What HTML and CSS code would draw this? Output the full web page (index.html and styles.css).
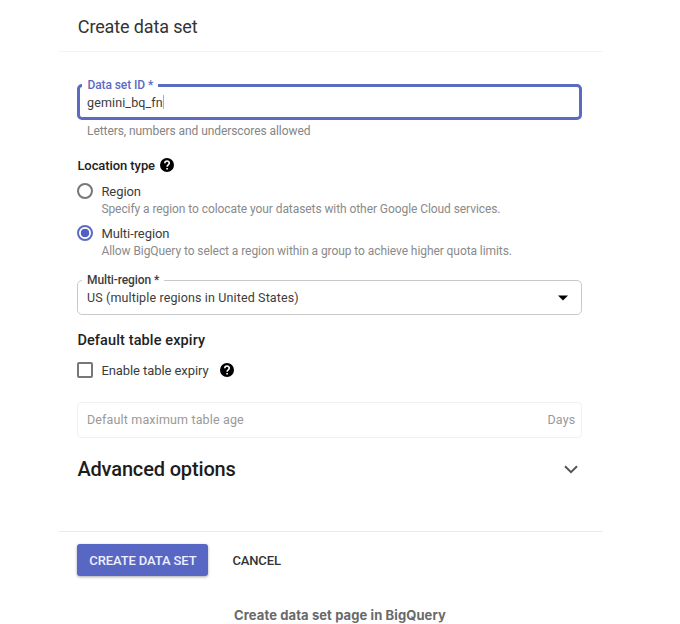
FILE: index.html
```html
<!DOCTYPE html>
<html lang="en">
<head>
<meta charset="utf-8">
<title>Create data set</title>
<link rel="stylesheet" href="styles.css">
</head>
<body>
<figure class="figure">
  <section class="panel">
    <header class="panel-header"><h1 class="title">Create data set</h1></header>
    <form class="form">
      <fieldset class="field field-active">
        <legend class="legend"><span>Data set ID *</span></legend>
        <div class="field-row"><span>gemini_bq_fn</span><span class="caret"></span></div>
      </fieldset>
      <p class="hint">Letters, numbers and underscores allowed</p>

      <h2 class="group-title"><span>Location type</span>
        <svg class="help" viewBox="0 0 14 14"><circle cx="7" cy="7" r="7"/><path d="M4.8 5.3C4.8 2.2 9.3 2.3 9.3 5.1C9.3 6.8 7.1 6.9 7.1 8.7M7.1 10v1.6"/></svg>
      </h2>
      <div class="option">
        <span class="radio"></span>
        <div><div class="option-label">Region</div>
        <div class="option-desc">Specify a region to colocate your datasets with other Google Cloud services.</div></div>
      </div>
      <div class="option">
        <span class="radio radio-on"></span>
        <div><div class="option-label">Multi-region</div>
        <div class="option-desc">Allow BigQuery to select a region within a group to achieve higher quota limits.</div></div>
      </div>

      <fieldset class="field field-select">
        <legend class="legend"><span>Multi-region *</span></legend>
        <div class="field-row"><span>US (multiple regions in United States)</span>
          <svg class="arrow" viewBox="0 0 10 6"><path d="M0 .5h10L5 5.5z"/></svg></div>
      </fieldset>

      <h2 class="expiry-title">Default table expiry</h2>
      <div class="check-row">
        <span class="checkbox"></span>
        <span class="check-label">Enable table expiry</span>
        <svg class="help" viewBox="0 0 14 14"><circle cx="7" cy="7" r="7"/><path d="M4.8 5.3C4.8 2.2 9.3 2.3 9.3 5.1C9.3 6.8 7.1 6.9 7.1 8.7M7.1 10v1.6"/></svg>
      </div>
      <div class="field-disabled"><span>Default maximum table age</span><span>Days</span></div>
      <div class="advanced"><h2 class="advanced-title">Advanced options</h2>
        <svg class="chevron" viewBox="0 0 14 9"><path d="M1 1.2l6 6 6-6"/></svg></div>
    </form>
    <footer class="actions">
      <button class="btn btn-primary" type="button">CREATE DATA SET</button>
      <button class="btn btn-text" type="button">CANCEL</button>
    </footer>
  </section>
  <figcaption class="caption">Create data set page in BigQuery</figcaption>
</figure>
</body>
</html>
```
FILE: styles.css
```css
* { box-sizing: border-box; }
body { margin: 0; background: #fff; font-family: Roboto, "Liberation Sans", sans-serif; color: #3c3c3c; }
h1, h2, p, figure { margin: 0; }
.figure { width: 680px; height: 624px; overflow: hidden; }
.panel { width: 544px; margin-left: 59px; }
.panel-header { height: 52px; padding: 2px 0 0 18.8px; display: flex; align-items: center; border-bottom: 1px solid #f2f2f2; }
.title { font-size: 18px; font-weight: 400; letter-spacing: -.13px; color: #333; }
.form { height: 479px; padding: 27px 20.6px 0 18.4px; }
.field { margin: 0; padding: 0; height: 41px; border: 3px solid #5c6bc0; border-radius: 5px; min-width: 0; font-size: 12.5px; }
.legend { margin-left: 2px; padding: 0 5px; height: 13px; line-height: 13px; font-size: 12px; letter-spacing: -.08px; }
.legend span { display: block; }
.field-active .legend { color: #5c6bc0; font-weight: 500; }
.field-row { height: 20px; padding: 0 14px 0 6.6px; display: flex; align-items: center; letter-spacing: .13px; white-space: nowrap; }
.caret { width: 1px; height: 14px; background: #a5acd8; }
.hint { height: 20px; padding: 1px 0 0 9.6px; font-size: 12px; line-height: 20px; letter-spacing: -.07px; color: #858585; }
.group-title { display: flex; align-items: center; gap: 5px; margin-top: 15px; height: 20px; font-size: 13px; font-weight: 500; letter-spacing: -.08px; color: #222; white-space: nowrap; }
.help { width: 14px; height: 14px; flex: none; }
.help circle { fill: #000; }
.help path { fill: none; stroke: #fff; stroke-width: 1.6; }
.option { display: flex; gap: 8px; height: 41.5px; padding-top: 8px; white-space: nowrap; }
.radio { width: 16px; height: 16px; flex: none; border: 2px solid #777; border-radius: 50%; }
.radio-on { border-color: #5c6bc0; background: radial-gradient(circle, #5060c4 0 4px, #fff 4.6px); }
.option-label { font-size: 13px; line-height: 17px; letter-spacing: -.07px; color: #3c3c3c; }
.option-desc { font-size: 12px; line-height: 18px; letter-spacing: -.075px; color: #8a8a8a; }
.field-select { margin-top: 16px; border: 1.5px solid #c9c9c9; }
.field-select .legend { margin-left: 3.6px; font-weight: 500; letter-spacing: -.1px; }
.field-select .field-row { height: 21px; padding: 0 13.5px 0 8.6px; justify-content: space-between; }
.arrow { width: 10px; height: 6px; fill: #000; }
.expiry-title { margin-top: 15px; height: 20px; line-height: 21px; font-size: 14.5px; font-weight: 500; letter-spacing: .12px; color: #222; }
.check-row { display: flex; align-items: center; height: 20px; margin-top: 10px; font-size: 13px; letter-spacing: -.08px; }
.checkbox { width: 16px; height: 16px; border: 2px solid #777; border-radius: 2px; }
.check-label { margin: 0 12px 0 8px; white-space: nowrap; }
.field-disabled { display: flex; align-items: center; justify-content: space-between; height: 36px; margin-top: 22px; padding: 0 6px 2px 8.6px; border: 1.5px solid #f1f1f1; border-radius: 4px; font-size: 12.5px; letter-spacing: .15px; color: #999; }
.advanced { display: flex; align-items: center; justify-content: space-between; height: 30px; margin-top: 16px; padding-right: 4px; }
.advanced-title { font-size: 20px; font-weight: 500; letter-spacing: -.15px; color: #1c1c1c; }
.chevron { width: 14px; height: 9px; fill: none; stroke: #555; stroke-width: 2; }
.actions { display: flex; gap: 24px; height: 58px; padding: 12px 0 0 18.4px; border-top: 1.5px solid #ebebeb; }
.btn { height: 32px; padding: 0; border: 0; font: 500 13px Roboto, sans-serif; letter-spacing: -.12px; white-space: nowrap; }
.btn-primary { width: 131px; border-radius: 3px; background: #5867c3; color: #eef0ff; box-shadow: 0 1px 3px rgba(0,0,0,.35); }
.btn-text { background: none; color: #333; }
.caption { margin-top: 16px; text-align: center; font: 700 13px/20px Inter, "Liberation Sans", sans-serif; letter-spacing: .1px; color: #696969; }
```
